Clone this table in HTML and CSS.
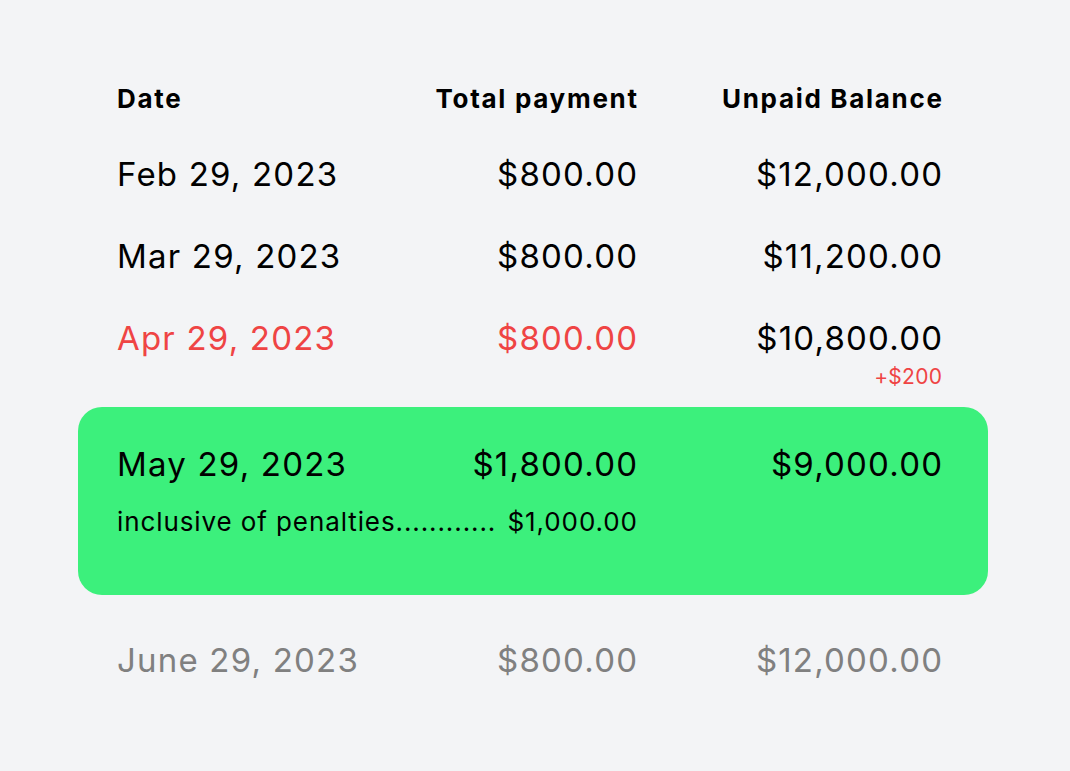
FILE: index.html
```html
<!DOCTYPE html>
<html lang="en">
<head>
<meta charset="utf-8">
<title>Payment schedule</title>
<link rel="stylesheet" href="styles.css">
</head>
<body>
<main class="schedule">
  <div class="row head">
    <div class="c-date">Date</div>
    <div class="c-pay">Total payment</div>
    <div class="c-bal">Unpaid Balance</div>
  </div>
  <div class="row">
    <div class="c-date">Feb 29, 2023</div>
    <div class="c-pay">$800.00</div>
    <div class="c-bal">$12,000.00</div>
  </div>
  <div class="row">
    <div class="c-date">Mar 29, 2023</div>
    <div class="c-pay">$800.00</div>
    <div class="c-bal">$11,200.00</div>
  </div>
  <div class="row late">
    <div class="c-date red">Apr 29, 2023</div>
    <div class="c-pay red">$800.00</div>
    <div class="c-bal">$10,800.00</div>
    <div class="note">+$200</div>
  </div>
  <div class="row current">
    <div class="c-date">May 29, 2023</div>
    <div class="c-pay">$1,800.00</div>
    <div class="c-bal">$9,000.00</div>
    <div class="penalty"><span>inclusive of penalties............</span><span class="amt">$1,000.00</span></div>
  </div>
  <div class="row future">
    <div class="c-date">June 29, 2023</div>
    <div class="c-pay">$800.00</div>
    <div class="c-bal">$12,000.00</div>
  </div>
</main>
</body>
</html>
```
FILE: styles.css
```css
html, body {
  margin: 0;
  padding: 0;
  background: #f3f4f6;
}
body {
  font-family: Inter, "Noto Sans", "Liberation Sans", sans-serif;
  color: #000;
  width: 1070px;
  height: 771px;
  overflow: hidden;
}
.schedule {
  width: 825px;
  margin-left: 117px;
  padding-top: 84px;
  display: flex;
  flex-direction: column;
}
.row {
  display: grid;
  grid-template-columns: 1fr 260px 305px;
  font-size: 33px;
  line-height: 40px;
  letter-spacing: 1.2px;
  white-space: nowrap;
  margin-top: 42px;
}
.row .c-pay, .row .c-bal {
  text-align: right;
  margin-right: -1.2px;
}
.head {
  margin-top: 0;
  font-size: 26px;
  line-height: 30px;
  letter-spacing: 1.7px;
  font-weight: 700;
}
.head .c-pay, .head .c-bal { margin-right: -1.7px; }
.head + .row { margin-top: 40px; }
.red { color: #ef4444; }
.note {
  grid-column: 3;
  text-align: right;
  color: #ef4444;
  font-size: 21px;
  line-height: 20px;
  letter-spacing: 0.3px;
  margin-right: -0.3px;
  margin-top: 9px;
}
.current {
  margin: 20px -46px 0 -39px;
  padding: 37px 46px 58px 39px;
  background: #3cf07c;
  border-radius: 24px;
}
.penalty {
  grid-column: 1 / 3;
  display: flex;
  justify-content: space-between;
  font-size: 26px;
  line-height: 30px;
  letter-spacing: 0.9px;
  margin-top: 23px;
}
.penalty .amt { margin-right: -0.9px; }
.future {
  margin-top: 45px;
  color: #808080;
}
```
